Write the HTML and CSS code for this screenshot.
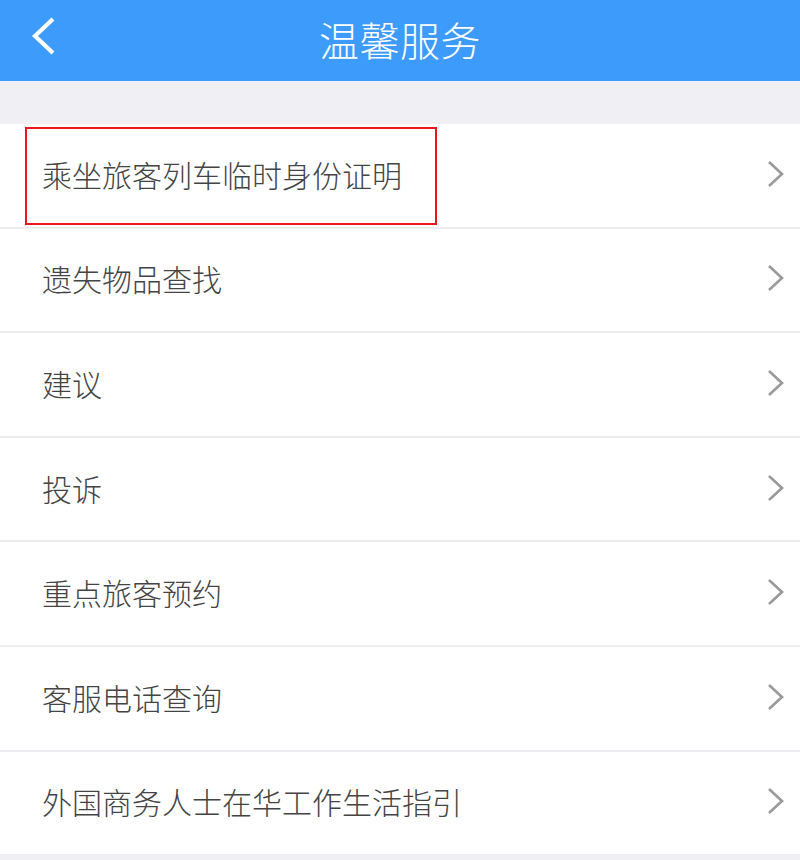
FILE: index.html
```html
<!DOCTYPE html>
<html lang="zh-CN">
<head>
<meta charset="utf-8">
<title>温馨服务</title>
<link rel="stylesheet" href="styles.css">
</head>
<body>
<div class="page">
  <header class="topbar">
    <svg class="back" width="30" height="40" viewBox="0 0 30 40"><path d="M24 2 L6 19 L24 36" fill="none" stroke="#fff" stroke-width="4.2" stroke-linecap="butt" stroke-linejoin="miter"/></svg>
    <h1 class="title">温馨服务</h1>
  </header>
  <div class="spacer"></div>
  <ul class="list">
    <li class="item">
      <span class="label">乘坐旅客列车临时身份证明</span>
      <svg class="arrow" width="20" height="30" viewBox="0 0 20 30"><path d="M3 2 L16 14 L3 26" fill="none" stroke="#9a9a9a" stroke-width="2.6"/></svg>
      <div class="highlight"></div>
    </li>
    <li class="item">
      <span class="label">遗失物品查找</span>
      <svg class="arrow" width="20" height="30" viewBox="0 0 20 30"><path d="M3 2 L16 14 L3 26" fill="none" stroke="#9a9a9a" stroke-width="2.6"/></svg>
    </li>
    <li class="item">
      <span class="label">建议</span>
      <svg class="arrow" width="20" height="30" viewBox="0 0 20 30"><path d="M3 2 L16 14 L3 26" fill="none" stroke="#9a9a9a" stroke-width="2.6"/></svg>
    </li>
    <li class="item">
      <span class="label">投诉</span>
      <svg class="arrow" width="20" height="30" viewBox="0 0 20 30"><path d="M3 2 L16 14 L3 26" fill="none" stroke="#9a9a9a" stroke-width="2.6"/></svg>
    </li>
    <li class="item">
      <span class="label">重点旅客预约</span>
      <svg class="arrow" width="20" height="30" viewBox="0 0 20 30"><path d="M3 2 L16 14 L3 26" fill="none" stroke="#9a9a9a" stroke-width="2.6"/></svg>
    </li>
    <li class="item">
      <span class="label">客服电话查询</span>
      <svg class="arrow" width="20" height="30" viewBox="0 0 20 30"><path d="M3 2 L16 14 L3 26" fill="none" stroke="#9a9a9a" stroke-width="2.6"/></svg>
    </li>
    <li class="item">
      <span class="label">外国商务人士在华工作生活指引</span>
      <svg class="arrow" width="20" height="30" viewBox="0 0 20 30"><path d="M3 2 L16 14 L3 26" fill="none" stroke="#9a9a9a" stroke-width="2.6"/></svg>
    </li>
  </ul>
</div>
</body>
</html>
```
FILE: styles.css
```css
html, body {
  margin: 0;
  padding: 0;
  background: #efeff4;
}
body {
  font-family: "Noto Sans CJK SC", "Noto Sans", sans-serif;
}
.page {
  width: 800px;
  min-height: 860px;
  background: #efeff4;
}
.topbar {
  height: 81px;
  background: #3d9bfc;
  display: flex;
  align-items: center;
  justify-content: center;
  position: relative;
}
.back {
  position: absolute;
  left: 29px;
  top: 17px;
}
.title {
  margin: 0;
  color: #fff;
  font-weight: 300;
  font-size: 40px;
  line-height: 1;
  letter-spacing: 0.5px;
  margin-top: -4px;
}
.spacer {
  height: 43px;
}
.list {
  list-style: none;
  margin: 0;
  padding: 0;
}
.item {
  position: relative;
  height: 102.6px;
  background: #fff;
  display: flex;
  align-items: center;
  justify-content: space-between;
  padding: 0 14px 0 42px;
  box-sizing: border-box;
}
.item + .item {
  border-top: 2px solid #ececf1;
  height: 104.6px;
}
.label {
  font-size: 30px;
  font-weight: 300;
  color: #444;
  line-height: 1;
  margin-top: -3px;
}
.arrow {
  margin-top: -1px;
}
.highlight {
  position: absolute;
  left: 25px;
  top: 3px;
  width: 412px;
  height: 98px;
  border: 2px solid #f0141c;
  box-sizing: border-box;
}
```
